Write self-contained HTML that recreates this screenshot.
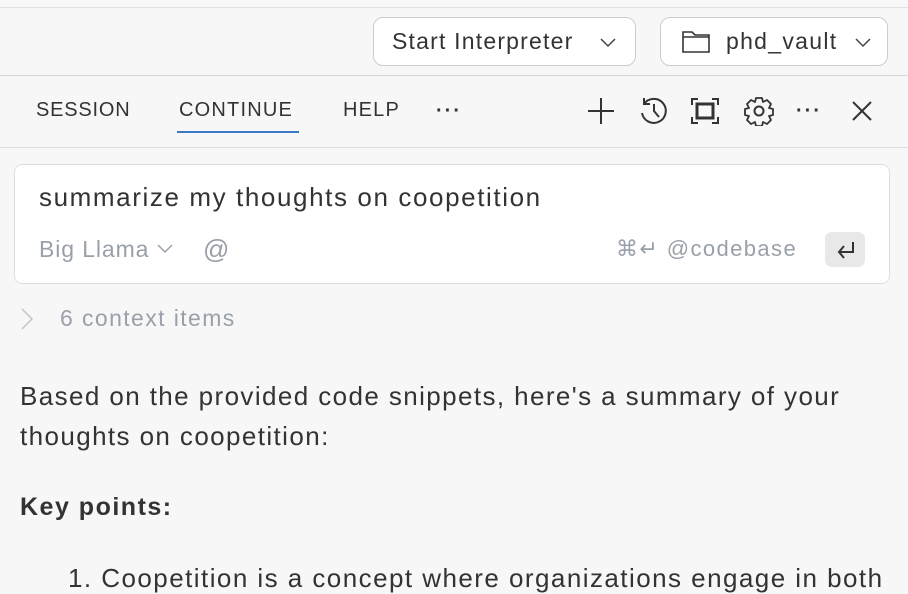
<!DOCTYPE html>
<html><head><style>
body{margin:0;width:908px;height:582px;overflow:hidden;background:#f7f7f7;font-family:"Liberation Sans",sans-serif;color:#333;position:relative}
.a{position:absolute;white-space:nowrap}
.btn{position:absolute;top:17px;height:49px;border:1.5px solid #ccc;border-radius:10px;background:#fff;box-sizing:border-box;font-size:23px;line-height:47px;color:#333}
.tab{position:absolute;top:99px;font-size:20px;color:#333;letter-spacing:1.2px}
svg{position:absolute}
</style></head><body>
<div class="a" style="left:0;top:7px;width:908px;height:1px;background:#e2e2e2"></div>
<div class="a" style="left:0;top:75px;width:908px;height:1px;background:#d6d6d6"></div>
<div class="btn" style="left:373px;width:263px"><span style="margin-left:18px;letter-spacing:1.2px">Start Interpreter</span></div>
<svg style="left:600px;top:38px" width="16" height="10"><path d="M1 1l7 7 7-7" fill="none" stroke="#444" stroke-width="1.5"/></svg>
<div class="btn" style="left:660px;width:228px"><span style="margin-left:65px;letter-spacing:1.3px">phd_vault</span></div>
<svg style="left:681px;top:29px" width="30" height="26"><path d="M2 3h9l3 3h14v17H2z M2 8h26" fill="none" stroke="#333" stroke-width="1.6"/></svg>
<svg style="left:855px;top:38px" width="16" height="10"><path d="M1 1l7 7 7-7" fill="none" stroke="#444" stroke-width="1.5"/></svg>
<div class="tab" style="left:36px;letter-spacing:.8px">SESSION</div>
<div class="tab" style="left:179px">CONTINUE</div>
<div class="a" style="left:177px;top:131px;width:122px;height:2px;background:#3a79c4"></div>
<div class="tab" style="left:343px">HELP</div>
<div class="tab" style="left:436px;top:100px;font-weight:bold;letter-spacing:2px">···</div>
<svg style="left:586px;top:96px" width="30" height="30"><path d="M15 2v26M2 15h26" stroke="#333" stroke-width="2"/></svg>
<svg style="left:638px;top:95px" width="32" height="32"><path d="M6 9A12 12 0 1 1 4 18M6 3v6h6M16 9v7l5 6" fill="none" stroke="#333" stroke-width="2"/></svg>
<svg style="left:690px;top:97px" width="30" height="28"><path d="M2 8V2h6M22 2h6v6M28 20v6h-6M8 26H2v-6" fill="none" stroke="#333" stroke-width="2"/><rect x="7" y="7" width="16" height="14" fill="none" stroke="#333" stroke-width="3"/></svg>
<svg style="left:744px;top:96px" width="30" height="30"><circle cx="15" cy="15" r="4.5" fill="none" stroke="#333" stroke-width="2"/><path d="M12 2h6l1 4 4-2 4 4-2 4 4 1v6l-4 1 2 4-4 4-4-2-1 4h-6l-1-4-4 2-4-4 2-4-4-1v-6l4-1-2-4 4-4 4 2z" fill="none" stroke="#333" stroke-width="1.8" stroke-linejoin="round"/></svg>
<div class="tab" style="left:796px;top:100px;font-weight:bold;letter-spacing:2px">···</div>
<svg style="left:851px;top:100px" width="22" height="22"><path d="M2 2l18 18M20 2L2 20" stroke="#333" stroke-width="2"/></svg>
<div class="a" style="left:0;top:147px;width:908px;height:1px;background:#ddd"></div>
<div class="a" style="left:14px;top:164px;width:876px;height:120px;background:#fff;border:1px solid #ddd;border-radius:8px;box-sizing:border-box"></div>
<div class="a" style="left:39px;top:182px;font-size:26px;letter-spacing:1.6px;color:#333">summarize my thoughts on coopetition</div>
<div class="a" style="left:39px;top:236px;font-size:23px;letter-spacing:.9px;color:#9aa0aa">Big Llama</div>
<svg style="left:157px;top:244px" width="16" height="10"><path d="M1 1l7 7 7-7" fill="none" stroke="#9aa0aa" stroke-width="1.5"/></svg>
<div class="a" style="left:203px;top:234px;font-size:26px;color:#9aa0aa">@</div>
<div class="a" style="left:616px;top:236px;font-size:22px;letter-spacing:1.4px;color:#9aa0aa">⌘↵ @codebase</div>
<div class="a" style="left:825px;top:232px;width:40px;height:35px;background:#e8e8e8;border-radius:7px"></div>
<svg style="left:835px;top:240px" width="22" height="20"><path d="M18 2v10H4M9 6l-5 6 5 6" fill="none" stroke="#333" stroke-width="2"/></svg>
<svg style="left:20px;top:307px" width="14" height="24"><path d="M2 2l10 10L2 22" fill="none" stroke="#c4c4c4" stroke-width="1.5"/></svg>
<div class="a" style="left:60px;top:305px;font-size:23px;letter-spacing:1.4px;color:#9aa0aa">6 context items</div>
<div class="a" style="left:20px;top:376px;font-size:26px;letter-spacing:1.4px;line-height:40px;color:#333">Based on the provided code snippets, here's a summary of your<br>thoughts on coopetition:</div>
<div class="a" style="left:20px;top:493px;font-size:25px;letter-spacing:1.5px;font-weight:bold;color:#333">Key points:</div>
<div class="a" style="left:68px;top:563px;font-size:26px;letter-spacing:1.45px;color:#333">1. Coopetition is a concept where organizations engage in both</div>
</body></html>
